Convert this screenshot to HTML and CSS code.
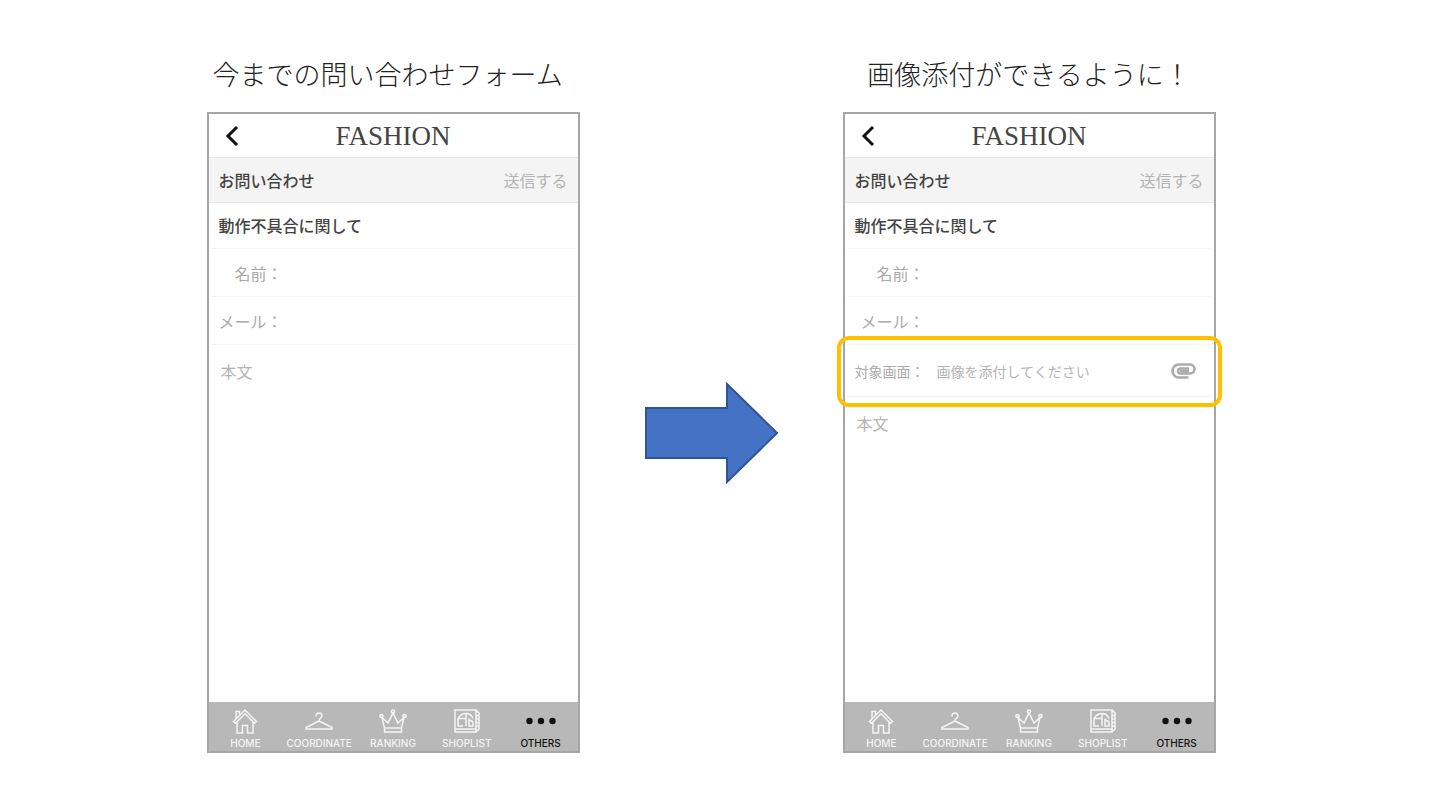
FILE: index.html
```html
<!DOCTYPE html>
<html lang="ja">

<head>
  <meta charset="utf-8">
  <title>お問い合わせフォーム</title>
  <meta name="viewport" content="width=device-width, initial-scale=1.0">
  <link rel="stylesheet" href="styles.css">
</head>

<body>
  <svg class="sprite" aria-hidden="true">
    <symbol id="back" viewBox="0 0 14 22">
      <path d="M12 2 3 11l9 9" fill="none" stroke="currentColor" stroke-width="3" />
    </symbol>
    <symbol id="home" viewBox="0 0 28 28">
      <path d="M2.5 14.500 14 3l11.500 11.500-2 1.700L14 6.800l-9.500 9.400zM5 11.500V4.500h3.500V8M6 15v11h5.500v-7.500h5V26H22V15" />
    </symbol>
    <symbol id="hanger" viewBox="0 0 28 28">
      <path d="M11 9.500C10.800 7.500 12 6 14 6s3.200 1.400 3 3.200C16.700 11.500 14 11 14 14L1 20.500V22h26v-1.500L14 14" />
    </symbol>
    <symbol id="crown" viewBox="0 0 28 28">
      <path d="M5.500 25v-4h17v4zM5.500 21 3 10.500l6 5.500 5-10 5 10 6-5.500L22.500 21" />
      <circle cx="14" cy="4.500" r="1.600" />
      <circle cx="2.500" cy="9" r="1.600" />
      <circle cx="25.500" cy="9" r="1.600" />
    </symbol>
    <symbol id="shop" viewBox="0 0 28 28">
      <path d="M2 3h21v19H2zM2 22v3h21l3-3V6l-3-3M23 22v3M23 8.500h3M23 12h3M23 15.500h3M23 19h3M5 11.500C7 8 10 6.500 13 6.500s5.500 1.500 7 5M5 11.500h8M5 11.500V19h5M13 6.500V19M16 11.500V19h4v-4l-4-2.500" />
    </symbol>
    <symbol id="dots" viewBox="0 0 32 28">
      <g fill="currentColor" stroke="none">
        <circle cx="4.500" cy="14" r="3.200" />
        <circle cx="16" cy="14" r="3.200" />
        <circle cx="27.500" cy="14" r="3.200" />
      </g>
    </symbol>
    <symbol id="clip" viewBox="0 0 26 18">
      <path d="M18.500 15.500H9a6.500 6.500 0 0 1 0-13h11a4.500 4.500 0 0 1 0 9h-9.500a2.500 2.500 0 0 1 0-5H19" fill="none" stroke="currentColor" stroke-width="2.600" />
      <path d="M10 9h9" stroke="currentColor" stroke-width="3" />
    </symbol>
  </svg>

  <main class="compare">
    <h2 class="caption caption-before">今までの問い合わせフォーム</h2>
    <h2 class="caption caption-after">画像添付ができるように！</h2>

    <form class="phone">
      <header class="title-bar">
        <button class="back" type="button" aria-label="戻る"><svg><use href="#back" /></svg></button>
        <h1>FASHION</h1>
      </header>
      <div class="action-bar">
        <h3>お問い合わせ</h3>
        <button type="submit">送信する</button>
      </div>
      <p class="subject">動作不具合に関して</p>
      <div class="field">
        <label for="name1">名前：</label>
        <input id="name1" type="text">
      </div>
      <div class="field">
        <label for="mail1">メール：</label>
        <input id="mail1" type="email">
      </div>
      <textarea class="message" aria-label="本文" placeholder="本文"></textarea>
      <nav class="tabs">
        <a href="#"><svg><use href="#home" /></svg>HOME</a>
        <a href="#"><svg><use href="#hanger" /></svg>COORDINATE</a>
        <a href="#"><svg><use href="#crown" /></svg>RANKING</a>
        <a href="#"><svg><use href="#shop" /></svg>SHOPLIST</a>
        <a href="#" class="active"><svg><use href="#dots" /></svg>OTHERS</a>
      </nav>
    </form>

    <svg class="arrow" viewBox="0 0 133 102" aria-hidden="true">
      <path d="M1 26h81V2l50 49-50 49V76H1z" />
    </svg>

    <form class="phone phone-after">
      <header class="title-bar">
        <button class="back" type="button" aria-label="戻る"><svg><use href="#back" /></svg></button>
        <h1>FASHION</h1>
      </header>
      <div class="action-bar">
        <h3>お問い合わせ</h3>
        <button type="submit">送信する</button>
      </div>
      <p class="subject">動作不具合に関して</p>
      <div class="field">
        <label for="name2">名前：</label>
        <input id="name2" type="text">
      </div>
      <div class="field">
        <label for="mail2">メール：</label>
        <input id="mail2" type="email">
      </div>
      <div class="field attach">
        <label for="file2">対象画面：</label>
        <input id="file2" type="text" placeholder="画像を添付してください" readonly>
        <button type="button" aria-label="画像を添付"><svg><use href="#clip" /></svg></button>
      </div>
      <textarea class="message" aria-label="本文" placeholder="本文"></textarea>
      <nav class="tabs">
        <a href="#"><svg><use href="#home" /></svg>HOME</a>
        <a href="#"><svg><use href="#hanger" /></svg>COORDINATE</a>
        <a href="#"><svg><use href="#crown" /></svg>RANKING</a>
        <a href="#"><svg><use href="#shop" /></svg>SHOPLIST</a>
        <a href="#" class="active"><svg><use href="#dots" /></svg>OTHERS</a>
      </nav>
    </form>
  </main>
</body>

</html>
```
FILE: styles.css
```css
* {
  margin: 0;
  padding: 0;
  box-sizing: border-box;
}

body {
  background: #fff;
  color: #444;
  font-family: "Noto Sans CJK JP", sans-serif;
  font-size: 16px;
  line-height: 24px;
}

button,
input,
textarea {
  border: none;
  outline: none;
  background: none;
  font: inherit;
  color: inherit;
}

button {
  cursor: pointer;
}

.sprite {
  display: none;
}

.compare {
  display: grid;
  grid-template-columns: minmax(0, 373px) 133px minmax(0, 373px);
  grid-template-rows: 40px auto;
  gap: 18px 65px;
  justify-content: center;
  padding: 54px 18px 54px 0;
}

.caption {
  font-size: 27px;
  font-weight: 300;
  line-height: 40px;
  color: #222;
  text-align: center;
  white-space: nowrap;
}

.caption-before {
  padding-left: 6px;
  text-align: left;
}

.caption-after {
  grid-column: 3;
}

.arrow {
  width: 133px;
  height: 102px;
  align-self: center;
  fill: #4472c4;
  stroke: #2f5597;
  stroke-width: 2;
}

/* phone */
.phone {
  display: flex;
  flex-direction: column;
  min-height: 641px;
  border: 2px solid #a6a6a6;
}

.title-bar {
  display: grid;
  grid-template-columns: 46px 1fr 46px;
  align-items: center;
  height: 43px;
}

.title-bar h1 {
  font-family: "Liberation Serif", serif;
  font-size: 27px;
  font-weight: 400;
  text-align: center;
}

.back {
  height: 22px;
  color: #111;
}

.back svg {
  display: block;
  width: 14px;
  height: 22px;
  margin: 0 auto;
}

.action-bar {
  display: flex;
  justify-content: space-between;
  align-items: center;
  height: 46px;
  padding: 0 10px;
  background: #f4f4f4;
  border-top: 1px solid #e8e8e8;
  border-bottom: 1px solid #e8e8e8;
}

.action-bar h3,
.subject {
  font-size: 16px;
  font-weight: 500;
}

.action-bar button {
  color: #b4b4b4;
}

.subject,
.field {
  margin: 0 2px;
  padding: 0 8px;
  border-bottom: 1px solid #f4f4f4;
}

.subject {
  line-height: 45px;
}

.field {
  display: flex;
  align-items: center;
  gap: 12px;
  height: 48px;
  color: #aaa;
}

.field label {
  flex: none;
  width: 64px;
  text-align: right;
}

.phone-after .field label {
  width: 70px;
}

.field input {
  flex: 1;
  min-width: 0;
}

.attach {
  position: relative;
  height: 52px;
  font-size: 14px;
}

/* highlight around the new row */
.attach::after {
  content: "";
  position: absolute;
  inset: -9px -10px -11px;
  border: 4px solid #ffc000;
  border-radius: 12px;
  pointer-events: none;
}

.attach button {
  margin-right: 8px;
}

.attach svg {
  display: block;
  width: 26px;
  height: 18px;
}

.message {
  flex: 1;
  padding: 14px 12px;
  color: #444;
  resize: none;
}

::placeholder {
  color: #b4b4b4;
  opacity: 1;
}

/* bottom tabs */
.tabs {
  display: grid;
  grid-template-columns: repeat(5, 1fr);
  height: 49px;
  background: #b8b8b8;
}

.tabs a {
  display: flex;
  flex-direction: column;
  align-items: center;
  padding-top: 5px;
  font-family: Inter, sans-serif;
  font-size: 10px;
  font-weight: 500;
  line-height: 12px;
  color: #f4f4f4;
  text-decoration: none;
}

.tabs svg {
  width: 32px;
  height: 28px;
  margin-bottom: 2px;
  fill: none;
  stroke: currentColor;
  stroke-width: 1.5;
}

.tabs .active {
  color: #111;
}
```
